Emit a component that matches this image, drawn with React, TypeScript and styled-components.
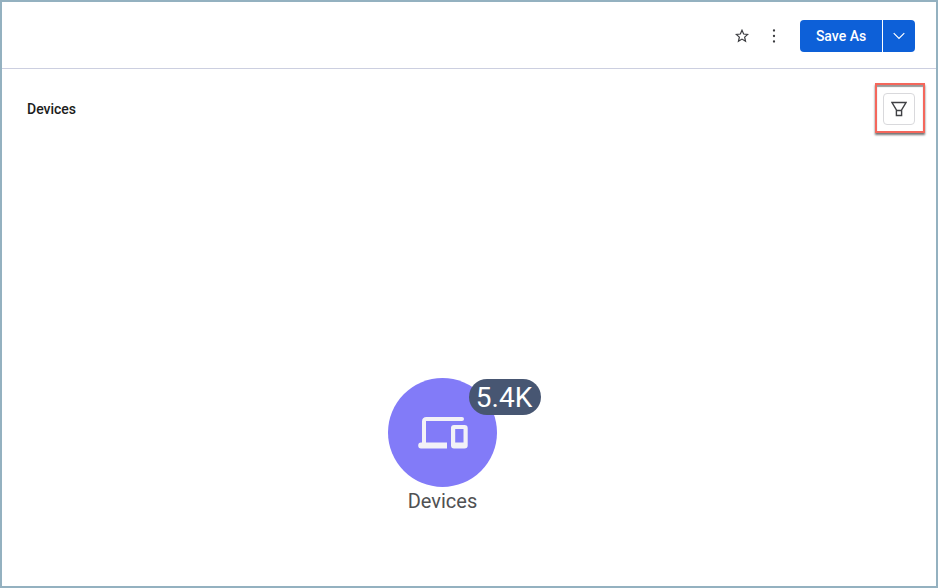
import React from "react";
import styled, { createGlobalStyle } from "styled-components";

const GlobalStyle = createGlobalStyle`
  * { box-sizing: border-box; }
  body { margin: 0; font-family: Roboto, "Liberation Sans", sans-serif; background: #fff; }
  button { font-family: inherit; margin: 0; padding: 0; border: 0; background: none; }
  svg { display: block; }
`;

const Page = styled.main`
  width: 938px;
  height: 588px;
  border: 2px solid #94b1c0;
  background: #fff;
  display: flex;
  flex-direction: column;
  overflow: hidden;
`;

const Toolbar = styled.header`
  height: 67px;
  flex: none;
  display: flex;
  justify-content: flex-end;
  align-items: center;
  padding: 2px 21px 0 0;
  border-bottom: 1px solid #cccfe0;
`;

const IconButton = styled.button`
  width: 32px;
  height: 32px;
  display: grid;
  place-items: center;
  color: #3a3b3f;
`;

const SplitButton = styled.div`
  display: flex;
  gap: 1px;
  margin-left: 10px;
  border-radius: 4px;
  overflow: hidden;
`;

const SplitPart = styled.button<{ $width: number }>`
  width: ${(p) => p.$width}px;
  height: 32px;
  display: grid;
  place-items: center;
  background: #0d60d8;
  color: #fff;
  font-size: 14px;
  font-weight: 500;
  line-height: 20px;
`;

const PanelHeader = styled.div`
  display: flex;
  justify-content: space-between;
  align-items: flex-start;
  padding: 14px 11px 0 25px;
`;

const Title = styled.h1`
  margin: 16px 0 0;
  color: #1c1d20;
  font-size: 14px;
  font-weight: 500;
  line-height: 20px;
`;

const Highlight = styled.div`
  width: 50px;
  height: 50px;
  display: grid;
  place-items: center;
  padding: 2px 2px 0 0;
  border: 2px solid #f4675c;
  box-shadow: 0 2px 2px rgba(0, 0, 0, 0.55), inset 0 2px 1px rgba(0, 0, 0, 0.4);
`;

const FilterButton = styled.button`
  width: 32px;
  height: 32px;
  display: grid;
  place-items: center;
  border: 1px solid #d9d9dc;
  border-radius: 4px;
  color: #404145;
`;

const Canvas = styled.section`
  flex: 1;
  display: flex;
  flex-direction: column;
  align-items: center;
  padding: 245px 53px 0 0;
`;

const Node = styled.div`
  position: relative;
  width: 109px;
  height: 109px;
  flex: none;
  display: grid;
  place-items: center;
  padding-left: 1px;
  border-radius: 50%;
  background: #827bf8;
`;

const Badge = styled.span`
  position: absolute;
  left: 81px;
  top: 1px;
  width: 72px;
  height: 36px;
  padding-right: 2px;
  border-radius: 18px;
  background: #475672;
  color: #fff;
  font-size: 28px;
  line-height: 37px;
  text-align: center;
`;

const NodeLabel = styled.div`
  color: #505153;
  font-size: 20px;
  line-height: 24px;
  margin-top: 2px;
`;

const StarIcon = () => (
  <svg width="14" height="14" viewBox="0 0 14 14" fill="none" stroke="currentColor" strokeWidth="1.2">
    <path d="M7 1.2 8.65 5l4.1.4-3.1 2.75.9 4.1L7 10.1l-3.55 2.15.9-4.1L1.25 5.4l4.1-.4Z" />
  </svg>
);

const MoreIcon = () => (
  <svg width="4" height="16" viewBox="0 0 4 16" fill="currentColor">
    <circle cx="2" cy="2.5" r="1.15" />
    <circle cx="2" cy="8" r="1.15" />
    <circle cx="2" cy="13.5" r="1.15" />
  </svg>
);

const ChevronIcon = () => (
  <svg width="12" height="8" viewBox="0 0 12 8" fill="none" stroke="currentColor" strokeWidth="1.2">
    <path d="m.7 1.2 5.3 5.3 5.3-5.3" />
  </svg>
);

const FilterIcon = () => (
  <svg width="16" height="16" viewBox="0 0 16 16" fill="none" stroke="currentColor" strokeWidth="1.4">
    <path d="M1 1.5h14L10.6 9v5.5H5.4V9ZM5.4 9.5h5.2" />
  </svg>
);

const DevicesIcon = () => (
  <svg width="51" height="33" viewBox="0 0 51 33">
    <path
      fill="#f2f1f7"
      fillRule="evenodd"
      d="M8.5 1H44a1.8 1.8 0 0 1 0 4H8V26.5H29V32.4H3Q.2 32.4 .2 29.4 .2 26.5 3 26.5H4V5.5Q4 1 8.5 1ZM36 9H46.5Q49.7 9 49.7 12V29.4Q49.7 32.4 46.5 32.4H36Q33 32.4 33 29.4V12Q33 9 36 9ZM37.2 13V26.5H45.5V13Z"
    />
  </svg>
);

export default function App() {
  return (
    <Page>
      <GlobalStyle />
      <Toolbar>
        <IconButton aria-label="Favorite"><StarIcon /></IconButton>
        <IconButton aria-label="More"><MoreIcon /></IconButton>
        <SplitButton>
          <SplitPart $width={82}>Save As</SplitPart>
          <SplitPart $width={32} aria-label="Save options"><ChevronIcon /></SplitPart>
        </SplitButton>
      </Toolbar>
      <PanelHeader>
        <Title>Devices</Title>
        <Highlight>
          <FilterButton aria-label="Filter"><FilterIcon /></FilterButton>
        </Highlight>
      </PanelHeader>
      <Canvas>
        <Node>
          <DevicesIcon />
          <Badge>5.4K</Badge>
        </Node>
        <NodeLabel>Devices</NodeLabel>
      </Canvas>
    </Page>
  );
}
